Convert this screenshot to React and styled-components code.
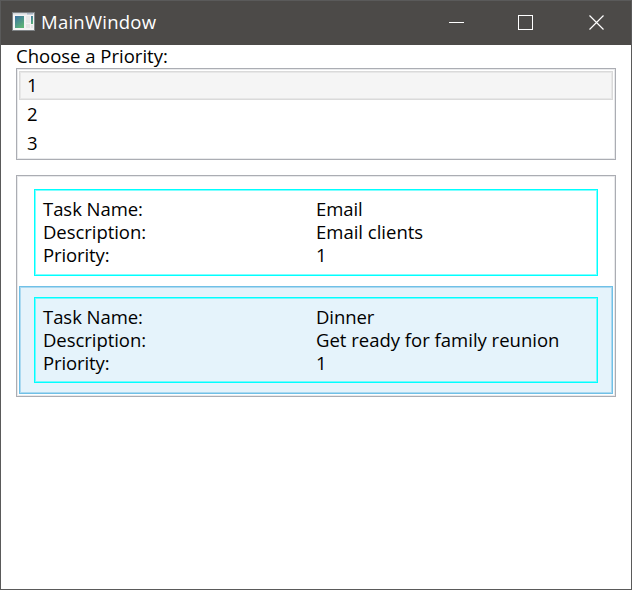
import React from "react";
import styled, { createGlobalStyle } from "styled-components";

const GlobalStyle = createGlobalStyle`
  * { box-sizing: border-box; }
  body {
    margin: 0;
    background: #ffffff;
    color: #000000;
    font: 18.5px/23px "Open Sans", "Noto Sans", sans-serif;
  }
`;

const Window = styled.main`
  display: flex;
  flex-direction: column;
  width: 632px;
  height: 590px;
  border: 1px solid #5a5a5a;
  background: #ffffff;
  overflow: hidden;
`;

const TitleBar = styled.header`
  display: flex;
  align-items: center;
  flex: 0 0 44px;
  padding-left: 11px;
  background: #4c4a48;
  color: #ffffff;
`;

const AppIcon = styled.svg`
  flex: none;
  width: 23px;
  height: 19px;
  margin: -3px 6px 0 0;
`;

const Title = styled.h1`
  flex: 1;
  margin: -3px 0 0;
  font: inherit;
`;

const CaptionButton = styled.button`
  display: flex;
  align-items: center;
  justify-content: center;
  width: 70px;
  height: 44px;
  padding: 0 0 0 ${(p) => p.$inset ?? 2}px;
  border: 0;
  background: transparent;
  color: #ffffff;
`;

const Content = styled.section`
  display: flex;
  flex-direction: column;
  padding: 0 15px;
`;

const Label = styled.label`
  height: 23px;
  line-height: 21px;
`;

const ListBox = styled.ul`
  list-style: none;
  margin: 0 0 ${(p) => p.$gap || 0}px;
  padding: 2px;
  height: ${(p) => p.$height}px;
  border: 1px solid #abadb3;
  box-shadow: inset 0 0 0 1px #e9eaec;
`;

const PriorityItem = styled.li`
  height: 29px;
  padding: 1px 7px;
  border: 1px solid ${(p) => (p.$selected ? "#dadada" : "transparent")};
  box-shadow: ${(p) => (p.$selected ? "inset 0 0 0 1px #e7e7e7" : "none")};
  background: ${(p) => (p.$selected ? "#f5f5f5" : "transparent")};
`;

const TaskItem = styled.li`
  height: 108px;
  padding: 10px 14px 0;
  border: 1px solid ${(p) => (p.$selected ? "#70c0e7" : "transparent")};
  box-shadow: ${(p) => (p.$selected ? "inset 0 0 0 1px #abd9f0" : "none")};
  background: ${(p) => (p.$selected ? "#e5f3fb" : "transparent")};
`;

const TaskCard = styled.dl`
  display: grid;
  grid-template-columns: 273px 1fr;
  grid-auto-rows: 23px;
  align-content: start;
  margin: 0;
  height: ${(p) => p.$height}px;
  padding: 7px 8px;
  border: 1px solid #00ffff;
  box-shadow: inset 0 0 0 1px ${(p) => (p.$selected ? "#73f9fd" : "#80ffff")};
`;

const Term = styled.dt``;

const Value = styled.dd`
  margin: 0;
`;

const Text = styled.span`
  white-space: nowrap;
  letter-spacing: ${(p) => p.$track || 0}px;
`;

const tasks = [
  { name: "Email", description: "Email clients", priority: 1, height: 87 },
  { name: "Dinner", description: "Get ready for family reunion", priority: 1, height: 86, selected: true },
];

function WindowIcon() {
  return (
    <AppIcon viewBox="0 0 23 19" aria-hidden="true">
      <defs>
        <linearGradient id="screen" x1="0" y1="0" x2="0.6" y2="1">
          <stop offset="0" stopColor="#3b6fa3" />
          <stop offset="1" stopColor="#5bb277" />
        </linearGradient>
      </defs>
      <rect x="0.5" y="0.5" width="22" height="18" fill="#f4f4f4" stroke="#7e8285" />
      <rect x="1" y="1" width="21" height="1.5" fill="#d5d8dc" />
      <rect x="15" y="1" width="6" height="1.5" fill="#a9b4c4" />
      <rect x="3" y="4" width="9" height="12" fill="url(#screen)" />
      <rect x="14" y="4" width="4" height="7" fill="#e9e9e9" />
      <rect x="14" y="12" width="4" height="4" fill="#e6e6e6" />
      <rect x="19" y="4" width="2" height="8" fill="url(#screen)" />
      <rect x="19" y="13" width="2" height="3" fill="#e6e6e6" />
    </AppIcon>
  );
}

export default function App() {
  return (
    <>
      <GlobalStyle />
      <Window>
        <TitleBar>
          <WindowIcon />
          <Title><Text $track={0.25}>MainWindow</Text></Title>
          <CaptionButton aria-label="Minimize">
            <svg width="16" height="16"><path d="M0 7.5h15" stroke="currentColor" /></svg>
          </CaptionButton>
          <CaptionButton aria-label="Maximize" $inset={0}>
            <svg width="16" height="16"><rect x="0.5" y="0.5" width="14" height="14" fill="none" stroke="currentColor" /></svg>
          </CaptionButton>
          <CaptionButton aria-label="Close">
            <svg width="16" height="16"><path d="M0.5 0.5l14 14M14.5 0.5l-14 14" stroke="currentColor" strokeWidth="1.2" /></svg>
          </CaptionButton>
        </TitleBar>
        <Content>
          <Label><Text>Choose a Priority:</Text></Label>
          <ListBox $height={92} $gap={15}>
            {[1, 2, 3].map((n) => (
              <PriorityItem key={n} $selected={n === 1}><Text $track={-0.2}>{n}</Text></PriorityItem>
            ))}
          </ListBox>
          <ListBox $height={222}>
            {tasks.map((t) => (
              <TaskItem key={t.name} $selected={t.selected}>
                <TaskCard $height={t.height} $selected={t.selected}>
                  <Term><Text $track={-0.05}>Task Name:</Text></Term>
                  <Value><Text $track={-0.1}>{t.name}</Text></Value>
                  <Term><Text $track={-0.05}>Description:</Text></Term>
                  <Value><Text>{t.description}</Text></Value>
                  <Term><Text $track={-0.1}>Priority:</Text></Term>
                  <Value><Text>{t.priority}</Text></Value>
                </TaskCard>
              </TaskItem>
            ))}
          </ListBox>
        </Content>
      </Window>
    </>
  );
}
